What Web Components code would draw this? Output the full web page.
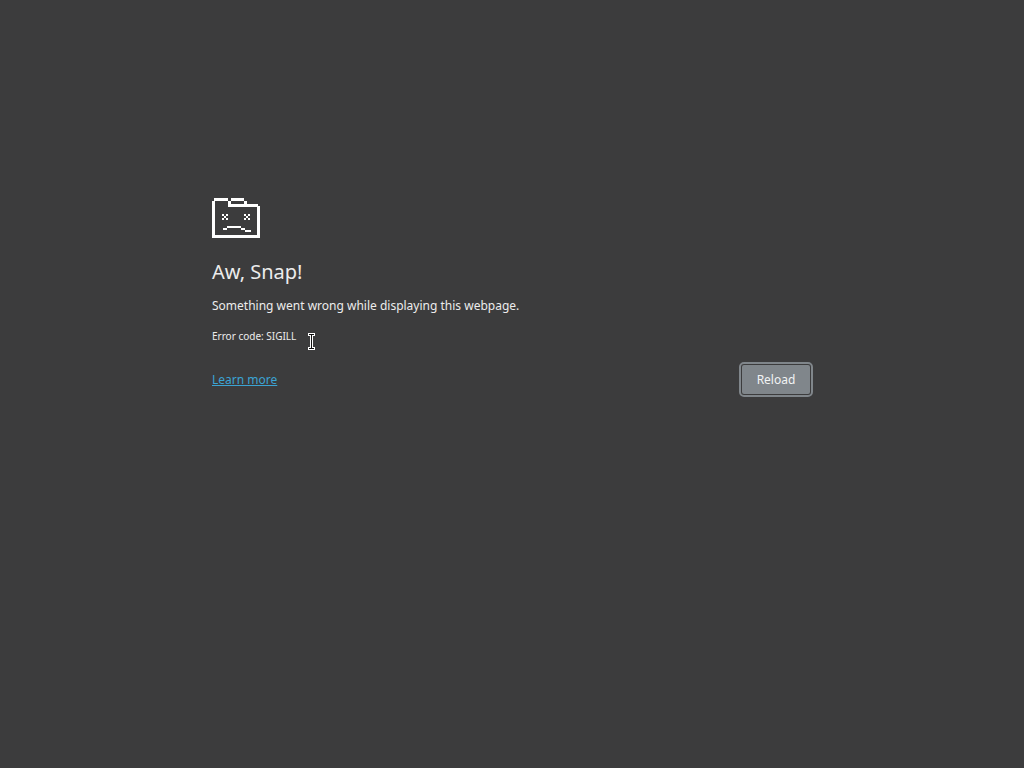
<!DOCTYPE html>
<html lang="en">
<head>
<meta charset="utf-8">
<title>Aw, Snap!</title>
<style>
body { margin: 0; background: #3c3c3d; color: #ececec; font: 12px/20px "Noto Sans", sans-serif; }
</style>
</head>
<body>
<error-page>
  <sad-folder slot="icon"></sad-folder>
  <span slot="title">Aw, Snap!</span>
  <span slot="message">Something went wrong while displaying this webpage.</span>
  <span slot="code">Error code: SIGILL</span>
  <help-link slot="actions">Learn more</help-link>
  <reload-button slot="actions">Reload</reload-button>
</error-page>
<text-cursor></text-cursor>
<script>
const define = (name, html) => customElements.define(name, class extends HTMLElement {
  constructor() {
    super();
    this.attachShadow({ mode: "open" }).innerHTML = html;
  }
});

define("sad-folder", `
<style>:host { display: block; width: 48px; height: 40px; } svg { display: block; }</style>
<svg width="48" height="40" viewBox="0 0 48 40" fill="#fff" shape-rendering="crispEdges" aria-hidden="true">
  <path d="M2 0H16V3H3V37H45V9H16V3H19V6H32V3H19V0H32V3H35V6H46V8H48V40H0V3H2Z"/>
  <path d="M10 16h2v2h2v-2h2v2h-2v2h2v2h-2v-2h-2v2h-2v-2h2v-2h-2zM32 16h2v2h2v-2h2v2h-2v2h2v2h-2v-2h-2v2h-2v-2h2v-2h-2z"/>
  <path d="M15 28H29V30H33V32H39V34H33V32H29V30H15V32H11V30H15Z"/>
</svg>`);

define("help-link", `
<style>:host { display: block; } a { color: #3ba4d4; text-decoration: underline; }</style>
<a href="#help"><slot></slot></a>`);

define("reload-button", `
<style>
:host { display: block; margin-right: -1px; border: 2px solid #80868b; border-radius: 5px; padding: 1px; }
button { display: block; margin: 0; padding: 0; width: 68px; height: 29px; border: 0; border-radius: 2px;
  background: #80868b; color: #f1f3f4; font: inherit; }
</style>
<button type="button"><slot></slot></button>`);

define("error-page", `
<style>
:host { display: block; box-sizing: border-box; width: 100%; max-width: 600px; margin: 0 auto; padding-top: 198px; }
h1 { margin: 20px 0 0; font-size: 20px; line-height: 28px; font-weight: 400; }
p { margin: 10px 0 0; }
.code { margin-top: 11px; font-size: 10px; line-height: 18px; }
.actions { display: flex; align-items: center; justify-content: space-between; margin-top: 17px; }
</style>
<main>
  <slot name="icon"></slot>
  <h1><slot name="title"></slot></h1>
  <p><slot name="message"></slot></p>
  <p class="code"><slot name="code"></slot></p>
  <div class="actions"><slot name="actions"></slot></div>
</main>`);

define("text-cursor", `
<style>:host { position: absolute; left: 308px; top: 333px; pointer-events: none; } svg { display: block; }</style>
<svg width="7" height="17" viewBox="0 0 7 17" shape-rendering="crispEdges" aria-hidden="true">
  <path fill="#fff" d="M0 0H7V3H5V14H7V17H0V14H2V3H0Z"/>
  <path fill="#111" d="M1 1H6V2H4V15H6V16H1V15H3V2H1Z"/>
</svg>`);
</script>
</body>
</html>
